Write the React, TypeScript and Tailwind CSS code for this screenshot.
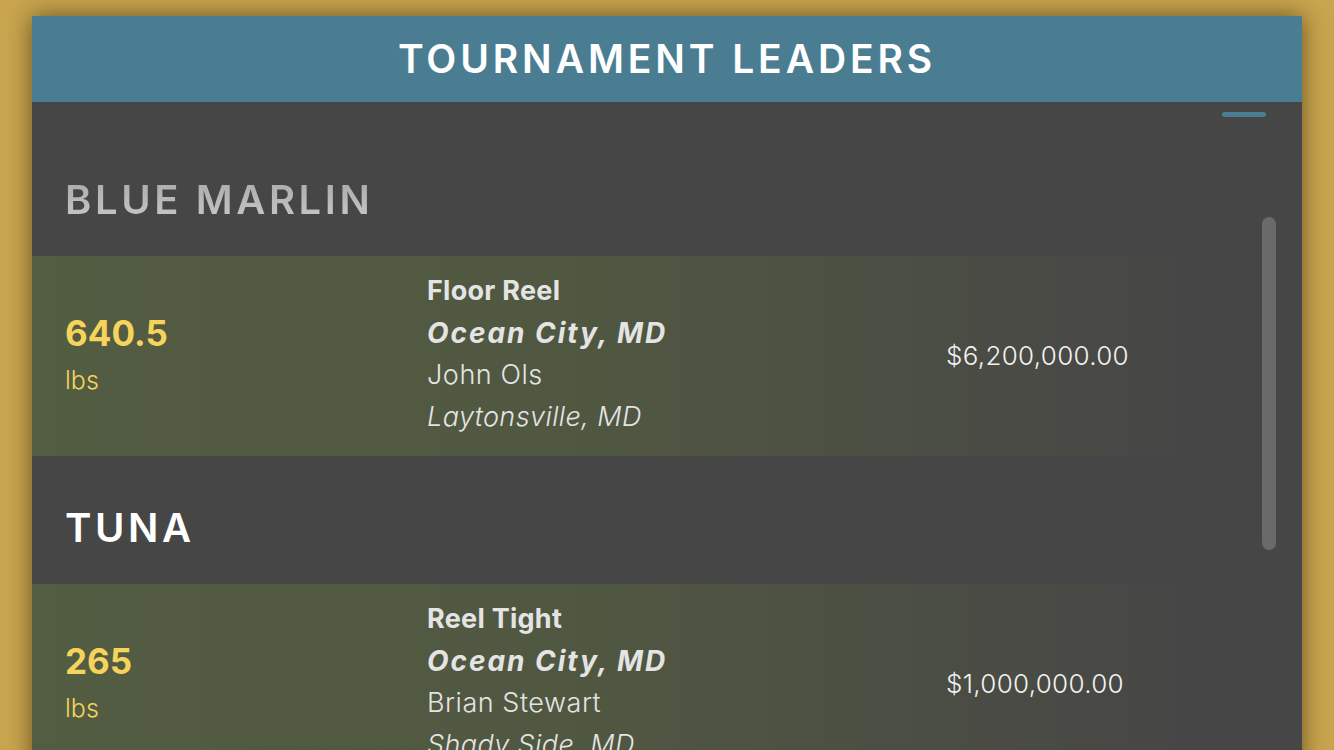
import React from "react";

interface Leader {
  weight: string;
  boat: string;
  port: string;
  angler: string;
  hometown: string;
  prize: string;
}

interface Section {
  species: string;
  muted?: boolean;
  leader: Leader;
}

const sections: Section[] = [
  {
    species: "Blue Marlin",
    muted: true,
    leader: {
      weight: "640.5",
      boat: "Floor Reel",
      port: "Ocean City, MD",
      angler: "John Ols",
      hometown: "Laytonsville, MD",
      prize: "$6,200,000.00",
    },
  },
  {
    species: "Tuna",
    leader: {
      weight: "265",
      boat: "Reel Tight",
      port: "Ocean City, MD",
      angler: "Brian Stewart",
      hometown: "Shady Side, MD",
      prize: "$1,000,000.00",
    },
  },
];

const LeaderRow = ({ leader }: { leader: Leader }) => {
  return (
    <div className="flex h-[200px] shrink-0 items-center mr-[132px] bg-[linear-gradient(90deg,#535d42_0%,#505741_50%,#474746_100%)]">
      <div className="w-[395px] shrink-0 pl-[33px] flex flex-col text-[#f6d35b]">
        <span className="text-[35px] font-bold leading-[48px]">{leader.weight}</span>
        <span className="text-[25px] font-light leading-[46px]">lbs</span>
      </div>
      <div className="w-[519px] shrink-0 flex flex-col text-[#e4e4e4] text-[27px] leading-[42px] -mt-1">
        <span className="font-bold text-[27px] tracking-[0.01em]">{leader.boat}</span>
        <span className="font-bold italic text-[28px] tracking-[0.07em]">{leader.port}</span>
        <span className="font-light tracking-[0.02em]">{leader.angler}</span>
        <span className="font-light italic tracking-[0.015em]">{leader.hometown}</span>
      </div>
      <div className="text-[26px] font-light text-[#f2f2f2] leading-[42px] tracking-[0.012em]">
        {leader.prize}
      </div>
    </div>
  );
};

export default function App() {
  return (
    <div
      className="h-[750px] w-full overflow-hidden bg-[#c8a54e] pt-4 px-8"
      style={{ fontFamily: "Inter, 'Open Sans', sans-serif" }}
    >
      <div className="flex h-[760px] flex-col bg-[#464646] shadow-[0_0_22px_rgba(40,25,0,0.6)]">
        <header className="flex h-[86px] shrink-0 items-center justify-center bg-[#4a7d92]">
          <h1 className="text-[39px] font-semibold uppercase tracking-[0.1em] text-white">
            Tournament Leaders
          </h1>
        </header>
        <div className="relative flex flex-1 flex-col overflow-hidden pt-[26px]">
          <div className="absolute right-[36px] top-[10px] h-[5px] w-[44px] rounded-sm bg-[#4a7d92]" />
          <div className="absolute right-[26px] top-[115px] h-[333px] w-[14px] rounded-full bg-[#6a6a6a]" />
          {sections.map((s) => (
            <div key={s.species} className="flex flex-col">
              <div className="flex h-[128px] shrink-0 items-center pl-[33px] pt-4">
                <h2
                  className={
                    s.muted
                      ? "text-[40px] font-semibold uppercase tracking-[0.09em] bg-gradient-to-b from-[#a4a4a4] to-[#cecece] bg-clip-text text-transparent"
                      : "text-[40px] font-semibold uppercase tracking-[0.09em] text-white"
                  }
                >
                  {s.species}
                </h2>
              </div>
              <LeaderRow leader={s.leader} />
            </div>
          ))}
        </div>
      </div>
    </div>
  );
}
